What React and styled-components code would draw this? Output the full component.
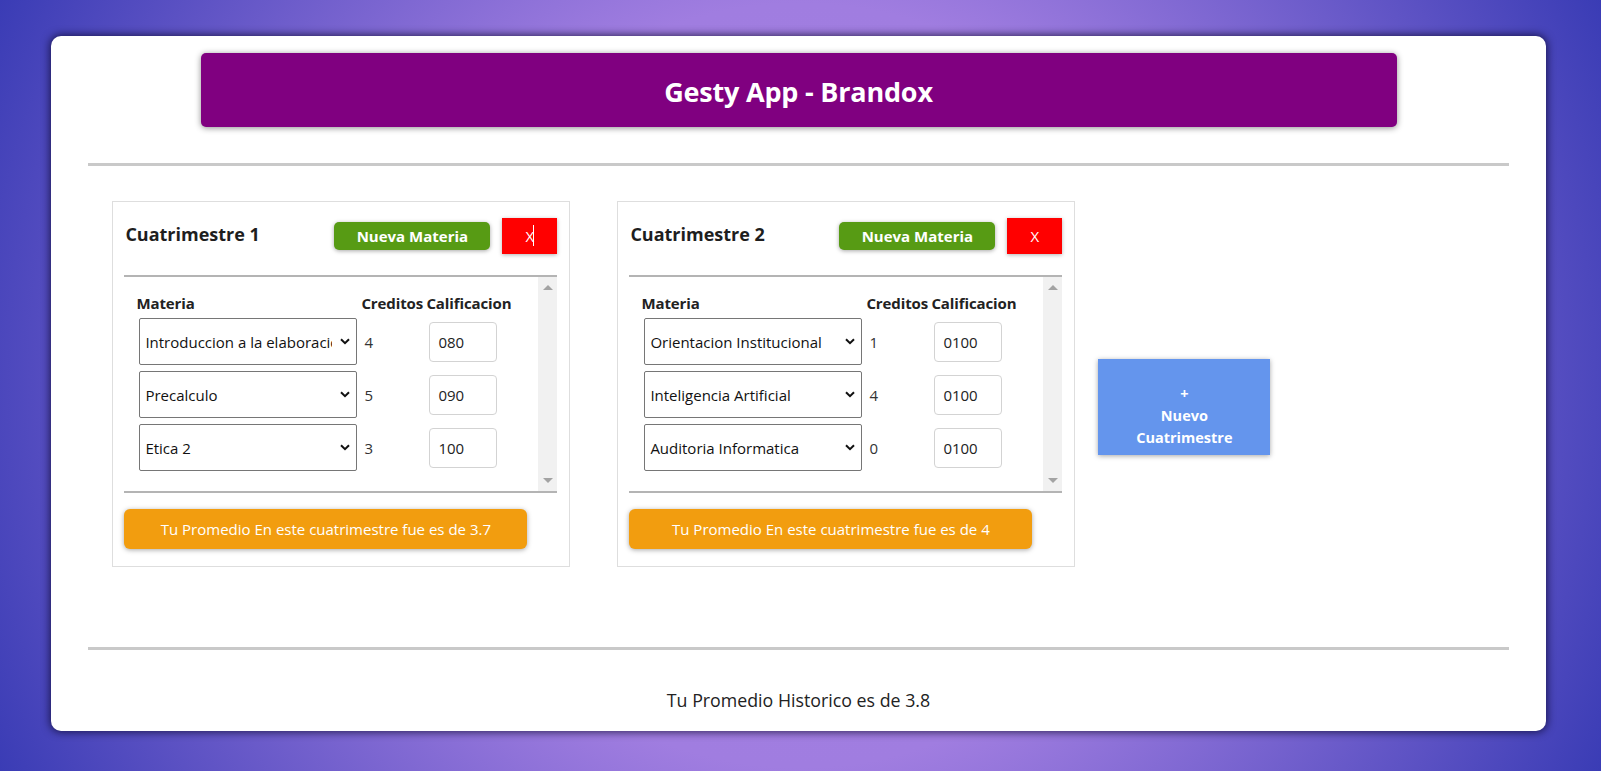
import React from 'react';
import styled, { createGlobalStyle } from 'styled-components';

const GlobalStyle = createGlobalStyle`
	html, body {
		margin: 0;
		padding: 0;
	}

	body {
		font-family: "Open Sans", "Noto Sans", sans-serif;
		color: #222;
		background: radial-gradient(circle at 50% 50%, #a57fe4 0%, #a07de0 43%, #3a3cb5 100%);
		min-height: 100vh;
	}
`;

const semesters = [
	{
		id: 1,
		name: 'Cuatrimestre 1',
		average: '3.7',
		cursor: true,
		subjects: [
			{ name: 'Introduccion a la elaboracion de proyectos', credits: 4, grade: '080' },
			{ name: 'Precalculo', credits: 5, grade: '090' },
			{ name: 'Etica 2', credits: 3, grade: '100' },
		],
	},
	{
		id: 2,
		name: 'Cuatrimestre 2',
		average: '4',
		subjects: [
			{ name: 'Orientacion Institucional', credits: 1, grade: '0100' },
			{ name: 'Inteligencia Artificial', credits: 4, grade: '0100' },
			{ name: 'Auditoria Informatica', credits: 0, grade: '0100' },
		],
	},
];

const Page = styled.div`
	padding: 36px 0 40px 51px;
	box-sizing: border-box;
	min-height: 100vh;
`;

const Card = styled.div`
	width: 1495px;
	height: 695px;
	box-sizing: border-box;
	padding-top: 17px;
	background: #fff;
	border-radius: 10px;
	box-shadow: 0 0 9px 1px rgba(10, 5, 40, 0.75);
`;

const Header = styled.div`
	width: 80%;
	height: 74px;
	margin: 0 auto;
	background: #800080;
	border-radius: 5px;
	box-shadow: 0 1px 6px rgba(0, 0, 0, 0.45);
	display: flex;
	align-items: center;
	justify-content: center;
`;

const Title = styled.h1`
	margin: 0 0 -2px;
	color: #fff;
	font-size: 27px;
	font-weight: 700;
	letter-spacing: -0.2px;
`;

const Divider = styled.div`
	width: 95%;
	height: 3px;
	margin: ${(p) => p.$top}px auto 0;
	background: #c9c9c9;
`;

const Semesters = styled.div`
	width: 95%;
	margin: 35px auto 0;
	display: flex;
	align-items: flex-start;
`;

const SemesterCard = styled.div`
	width: 458px;
	box-sizing: border-box;
	margin: 0 23.5px;
	padding: 16px 11.5px 17px;
	border: 1px solid #dedede;
	flex-shrink: 0;
`;

const SemesterHead = styled.div`
	display: flex;
	align-items: center;
	justify-content: space-between;
	margin-bottom: 21px;
`;

const SemesterTitle = styled.h3`
	margin: 0 0 5px 1px;
	font-size: 18px;
	font-weight: 700;
	color: #1e1e1e;
`;

const HeadActions = styled.div`
	display: flex;
	align-items: center;
	gap: 12px;
`;

const NewSubjectButton = styled.button`
	width: 156px;
	height: 28px;
	border: none;
	border-radius: 5px;
	background: #579b14;
	color: #fff;
	font-family: inherit;
	font-size: 15px;
	font-weight: 700;
	box-shadow: 0 1px 4px rgba(0, 0, 0, 0.35);
	cursor: pointer;
`;

const RemoveButton = styled.button`
	position: relative;
	width: 55px;
	height: 36px;
	border: none;
	background: #ff0000;
	color: #fff;
	font-family: inherit;
	font-size: 15px;
	box-shadow: 0 1px 4px rgba(0, 0, 0, 0.3);
	cursor: pointer;
`;

const Caret = styled.span`
	position: absolute;
	left: 31px;
	top: 7px;
	width: 1px;
	height: 21px;
	background: #fff;
`;

const SubjectsScroll = styled.div`
	height: 214px;
	display: flex;
	border-top: 2px solid #b4b4b4;
	border-bottom: 2px solid #b4b4b4;
`;

const SubjectsArea = styled.div`
	flex: 1;
	padding: 13px 0 0 12px;
	overflow-y: auto;
`;

const ScrollTrack = styled.div`
	width: 19px;
	flex-shrink: 0;
	background: #f1f1f1;
	display: flex;
	flex-direction: column;
	align-items: center;
	justify-content: space-between;
	padding: 8px 0;
	box-sizing: border-box;
`;

const Arrow = styled.svg`
	width: 10px;
	height: 5px;
	display: block;
`;

const SubjectsTable = styled.table`
	border-collapse: collapse;
`;

const Th = styled.th`
	width: ${(p) => p.$w}px;
	height: 25px;
	padding: 0;
	text-align: left;
	font-size: 15px;
	font-weight: 700;
	letter-spacing: -0.1px;
	vertical-align: middle;
	white-space: nowrap;
`;

const Td = styled.td`
	height: 53px;
	padding: 0;
	font-size: 15px;
	vertical-align: middle;
`;

const SelectWrap = styled.div`
	position: relative;
	width: 218px;
	height: 47px;
	margin-left: 3px;
`;

const Select = styled.select`
	width: 100%;
	height: 100%;
	appearance: none;
	box-sizing: border-box;
	padding: 0 24px 0 5px;
	border: 1px solid #767676;
	border-radius: 2px;
	background: #fff;
	color: #111;
	font-family: inherit;
	font-size: 15px;
`;

const Chevron = styled.svg`
	position: absolute;
	right: 7px;
	top: 50%;
	width: 10px;
	height: 7px;
	margin-top: -4px;
	pointer-events: none;
`;

const Credits = styled.span`
	display: inline-block;
	margin-left: 3px;
	color: #333;
`;

const GradeInput = styled.input`
	width: 68px;
	height: 40px;
	margin-left: 3px;
	box-sizing: border-box;
	padding: 0 0 0 8px;
	border: 1px solid #d3d3d3;
	border-radius: 4px;
	color: #222;
	font-family: inherit;
	font-size: 15px;
	outline: none;
`;

const AverageBox = styled.div`
	width: 403px;
	height: 40px;
	margin-top: 16px;
	border-radius: 6px;
	background: #f29d0f;
	color: #fff;
	font-size: 15px;
	display: flex;
	align-items: center;
	justify-content: center;
	box-shadow: 0 1px 5px rgba(0, 0, 0, 0.35);
`;

const AddButton = styled.button`
	align-self: center;
	flex-shrink: 0;
	width: 172px;
	height: 96px;
	margin-top: 46px;
	padding: 18px 0 0;
	border: none;
	background: #6495ed;
	color: #fff;
	font-family: inherit;
	font-size: 14.5px;
	font-weight: 700;
	line-height: 22px;
	box-shadow: 0 1px 5px rgba(0, 0, 0, 0.35);
	cursor: pointer;
`;

const Footer = styled.div`
	margin-top: 38px;
	text-align: center;
	font-size: 17.8px;
	color: #222;
`;

const Semester = ({ semester }) => (
	<SemesterCard>
		<SemesterHead>
			<SemesterTitle>{semester.name}</SemesterTitle>
			<HeadActions>
				<NewSubjectButton>Nueva Materia</NewSubjectButton>
				<RemoveButton>
					X
					{semester.cursor && <Caret />}
				</RemoveButton>
			</HeadActions>
		</SemesterHead>
		<SubjectsScroll>
			<SubjectsArea>
				<SubjectsTable>
					<thead>
						<tr>
							<Th $w={225}>Materia</Th>
							<Th $w={65}>Creditos</Th>
							<Th $w={90}>Calificacion</Th>
						</tr>
					</thead>
					<tbody>
						{semester.subjects.map((subject) => (
							<tr key={subject.name}>
								<Td>
									<SelectWrap>
										<Select defaultValue={subject.name}>
											<option>{subject.name}</option>
										</Select>
										<Chevron viewBox="0 0 10 7">
											<path d="M1 1.2 5 5.2 9 1.2" fill="none" stroke="#111" strokeWidth="2" />
										</Chevron>
									</SelectWrap>
								</Td>
								<Td>
									<Credits>{subject.credits}</Credits>
								</Td>
								<Td>
									<GradeInput defaultValue={subject.grade} />
								</Td>
							</tr>
						))}
					</tbody>
				</SubjectsTable>
			</SubjectsArea>
			<ScrollTrack>
				<Arrow viewBox="0 0 10 5">
					<path d="M0 5 5 0 10 5Z" fill="#a3a3a3" />
				</Arrow>
				<Arrow viewBox="0 0 10 5">
					<path d="M0 0 5 5 10 0Z" fill="#a3a3a3" />
				</Arrow>
			</ScrollTrack>
		</SubjectsScroll>
		<AverageBox>Tu Promedio En este cuatrimestre fue es de {semester.average}</AverageBox>
	</SemesterCard>
);

const App = () => (
	<>
		<GlobalStyle />
		<Page>
			<Card>
				<Header>
					<Title>Gesty App - Brandox</Title>
				</Header>
				<Divider $top={36} />
				<Semesters>
					{semesters.map((semester) => (
						<Semester key={semester.id} semester={semester} />
					))}
					<AddButton>
						+
						<br />
						Nuevo
						<br />
						Cuatrimestre
					</AddButton>
				</Semesters>
				<Divider $top={80} />
				<Footer>Tu Promedio Historico es de 3.8</Footer>
			</Card>
		</Page>
	</>
);

export default App;
